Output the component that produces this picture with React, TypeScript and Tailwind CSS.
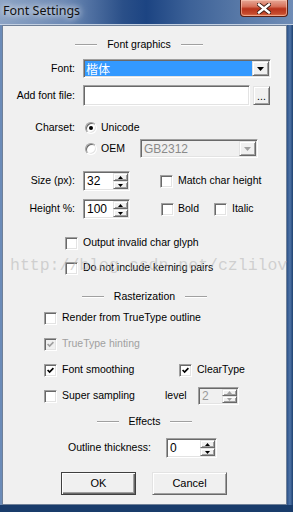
import React from 'react';

const sunken =
  'border border-t-[#a0a0a0] border-l-[#a0a0a0] border-r-white border-b-white shadow-[inset_1px_1px_0_#696969,inset_-1px_-1px_0_#e3e3e3]';
const raised =
  'border border-t-[#e3e3e3] border-l-[#e3e3e3] border-r-[#696969] border-b-[#696969] shadow-[inset_1px_1px_0_#ffffff,inset_-1px_-1px_0_#a0a0a0] bg-[#f0f0f0]';

const Etch = () => <div className="h-[2px] w-[22px] border-t border-t-[#a0a0a0] border-b border-b-white" />;

const Header = ({ label, className = '' }: { label: string; className?: string }) => (
  <div className={`flex h-[14px] items-center justify-center gap-[10px] ${className}`}>
    <Etch />
    <span>{label}</span>
    <Etch />
  </div>
);

const Check = ({ checked = false, disabled = false }: { checked?: boolean; disabled?: boolean }) => (
  <div
    className={`flex h-[13px] w-[13px] shrink-0 items-center justify-center ${sunken} ${
      disabled ? 'bg-[#f0f0f0]' : 'bg-white'
    }`}
  >
    {checked && (
      <svg width="7" height="7" viewBox="0 0 7 7">
        <polyline
          points="0.6,3 2.6,5 6.4,1.2"
          fill="none"
          stroke={disabled ? '#a0a0a0' : '#000'}
          strokeWidth="1.7"
        />
      </svg>
    )}
  </div>
);

const Radio = ({ checked = false }: { checked?: boolean }) => (
  <div className="relative h-[12px] w-[12px] shrink-0">
    <div className="absolute inset-0 rounded-full border border-t-[#a0a0a0] border-l-[#a0a0a0] border-r-white border-b-white bg-white shadow-[inset_1px_1px_0_#696969,inset_-1px_-1px_0_#e3e3e3]" />
    {checked && <div className="absolute left-[4px] top-[4px] h-[4px] w-[4px] rounded-full bg-black" />}
  </div>
);

const Arrow = ({ up, color = '#000' }: { up?: boolean; color?: string }) => (
  <svg width="5" height="3" viewBox="0 0 5 3">
    <path d={up ? 'M2.5 0 L5 3 L0 3 Z' : 'M0 0 L5 0 L2.5 3 Z'} fill={color} />
  </svg>
);

const Spinner = ({
  value,
  w,
  h,
  disabled = false,
}: {
  value: string;
  w: string;
  h: string;
  disabled?: boolean;
}) => (
  <div className={`flex ${w} ${h} shrink-0 p-[1px] ${sunken} ${disabled ? 'bg-[#f0f0f0]' : 'bg-white'}`}>
    <div className={`flex flex-1 items-center pl-[2px] text-[12px] ${disabled ? 'text-[#9a9a9a]' : 'text-black'}`}>
      {value}
    </div>
    <div className="flex w-[15px] flex-col">
      <div className={`flex flex-1 items-center justify-center ${raised}`}>
        <Arrow up color={disabled ? '#a0a0a0' : '#000'} />
      </div>
      <div className={`flex flex-1 items-center justify-center ${raised}`}>
        <Arrow color={disabled ? '#a0a0a0' : '#000'} />
      </div>
    </div>
  </div>
);

const DropButton = ({ disabled = false }: { disabled?: boolean }) => (
  <div className={`flex w-[17px] items-center justify-center ${raised}`}>
    <svg width="7" height="4" viewBox="0 0 7 4">
      <path d="M0 0 L7 0 L3.5 4 Z" fill={disabled ? '#a0a0a0' : '#000'} />
    </svg>
  </div>
);

const App = () => {
  return (
    <div className="flex h-[512px] w-[293px] flex-col overflow-hidden bg-[linear-gradient(180deg,#5c7eb0_0%,#2f5790_40%,#1b3d6c_100%)] font-['Liberation_Sans',Arial,sans-serif] text-[10.5px] text-black">
      {/* title bar */}
      <div className="relative flex h-[25px] shrink-0 items-start bg-[linear-gradient(90deg,#8ca3c4_0%,#6d8ab5_22%,#2a4f88_42%,#1c4482_50%,#3d6298_65%,#5d7daa_85%,#6f8cb6_100%)]">
        <div className="pl-[3px] pt-[3px] font-['Noto_Sans',sans-serif] text-[12.5px] leading-[16px] text-[#111] [text-shadow:0_0_6px_#ffffff,0_0_10px_rgba(255,255,255,0.8)]">
          Font Settings
        </div>
        <div className="ml-auto mr-[5px] flex h-[17px] w-[48px] items-center justify-center rounded-b-[4px] border border-t-0 border-[#5a1f14] bg-[linear-gradient(180deg,#e6a796_0%,#d7725b_40%,#b8321a_55%,#c54a2d_85%,#e07a55_100%)] shadow-[inset_0_0_0_1px_rgba(255,210,190,0.55)]">
          <svg width="14" height="11" viewBox="0 0 14 11">
            <path
              d="M2 1.5 L12 9.5 M12 1.5 L2 9.5"
              stroke="#3a1a12"
              strokeWidth="4.2"
              strokeLinecap="square"
            />
            <path d="M2 1.5 L12 9.5 M12 1.5 L2 9.5" stroke="#ffffff" strokeWidth="2.4" strokeLinecap="square" />
          </svg>
        </div>
        <div className="absolute bottom-0 left-0 right-0 h-[1px] bg-[#c3d0e2]" />
      </div>

      <div className="flex h-[480px] shrink-0">
        <div className="w-[2px] bg-[#6b8bb8]" />
        {/* client area */}
        <div className="relative flex h-[480px] w-[285px] flex-col border border-[#6f8098] bg-[#f0f0f0]">
          <Header label="Font graphics" className="mt-[12px] pr-[11px]" />

          <div className="mt-[7px] flex h-[19px] items-center">
            <div className="w-[72px] text-right">Font:</div>
            <div className={`ml-[8px] flex h-[19px] w-[188px] p-[1px] bg-white ${sunken}`}>
              <div className="flex flex-1 items-center bg-[#3399ff] pl-[1px] font-['Noto_Sans_CJK_SC',sans-serif] text-[12px] leading-none text-white">
                楷体
              </div>
              <DropButton />
            </div>
          </div>

          <div className="mt-[7px] flex h-[21px] items-center">
            <div className="w-[72px] text-right">Add font file:</div>
            <div className={`ml-[8px] h-[21px] w-[167px] bg-white ${sunken}`} />
            <div className={`ml-[3px] flex h-[19px] w-[17px] items-end justify-center pb-[3px] leading-none ${raised}`}>
              ...
            </div>
          </div>

          <div className="mt-[14px] flex h-[16px] items-center">
            <div className="w-[72px] text-right">Charset:</div>
            <div className="ml-[10px]">
              <Radio checked />
            </div>
            <span className="ml-[4px]">Unicode</span>
          </div>

          <div className="mt-[3px] flex h-[19px] items-center">
            <div className="ml-[82px]">
              <Radio />
            </div>
            <span className="ml-[4px] w-[39px]">OEM</span>
            <div className={`flex h-[19px] w-[118px] p-[1px] bg-[#f0f0f0] ${sunken}`}>
              <div className="flex flex-1 items-center pl-[2px] text-[12px] text-[#8a8a8a]">GB2312</div>
              <DropButton disabled />
            </div>
          </div>

          <div className="mt-[13px] flex h-[20px] items-center">
            <div className="w-[72px] text-right">Size (px):</div>
            <div className="ml-[8px]">
              <Spinner value="32" w="w-[47px]" h="h-[20px]" />
            </div>
            <div className="ml-[30px]">
              <Check />
            </div>
            <span className="ml-[5px]">Match char height</span>
          </div>

          <div className="mt-[8px] flex h-[20px] items-center">
            <div className="w-[72px] text-right">Height %:</div>
            <div className="ml-[8px]">
              <Spinner value="100" w="w-[47px]" h="h-[20px]" />
            </div>
            <div className="ml-[31px]">
              <Check />
            </div>
            <span className="ml-[4px] w-[36px]">Bold</span>
            <Check />
            <span className="ml-[5px]">Italic</span>
          </div>

          <div className="mt-[17px] flex h-[14px] items-center pl-[62px]">
            <Check />
            <span className="ml-[5px]">Output invalid char glyph</span>
          </div>

          <div className="mt-[11px] flex h-[14px] items-center pl-[62px]">
            <Check />
            <span className="ml-[5px]">Do not include kerning pairs</span>
          </div>

          <Header label="Rasterization" className="mt-[15px]" />

          <div className="mt-[7px] flex h-[14px] items-center pl-[41px]">
            <Check />
            <span className="ml-[5px]">Render from TrueType outline</span>
          </div>

          <div className="mt-[12px] flex h-[14px] items-center pl-[41px]">
            <Check checked disabled />
            <span className="ml-[5px] text-[#a0a0a0]">TrueType hinting</span>
          </div>

          <div className="mt-[12px] flex h-[14px] items-center pl-[41px]">
            <div className="flex w-[135px] items-center">
              <Check checked />
              <span className="ml-[5px]">Font smoothing</span>
            </div>
            <Check checked />
            <span className="ml-[5px]">ClearType</span>
          </div>

          <div className="mt-[10px] flex h-[18px] items-center pl-[41px]">
            <div className="flex w-[121px] items-center">
              <Check />
              <span className="ml-[5px]">Super sampling</span>
            </div>
            <span className="w-[33px]">level</span>
            <Spinner value="2" w="w-[41px]" h="h-[18px]" disabled />
          </div>

          <Header label="Effects" className="mt-[10px]" />

          <div className="mt-[9px] flex h-[20px] items-center pl-[65px]">
            <span>Outline thickness:</span>
            <div className="ml-[15px]">
              <Spinner value="0" w="w-[51px]" h="h-[20px]" />
            </div>
          </div>

          <div className="mt-[14px] flex h-[23px] items-center gap-[16px] pl-[58px]">
            <div className="flex h-[23px] w-[75px] items-center justify-center border border-[#404040] bg-[#f0f0f0] shadow-[inset_1px_1px_0_#ffffff,inset_-1px_-1px_0_#696969,inset_-2px_-2px_0_#a0a0a0] text-[11px]">
              OK
            </div>
            <div className={`flex h-[23px] w-[75px] items-center justify-center text-[11px] ${raised}`}>Cancel</div>
          </div>

          {/* watermark */}
          <div className="pointer-events-none absolute left-[7px] top-[230px] whitespace-nowrap font-['Liberation_Mono',monospace] text-[16.5px] leading-[20px] text-[rgba(185,185,185,0.6)]">
            http://blog.csdn.net/czlilov
          </div>
        </div>
        <div className="flex-1 bg-[linear-gradient(90deg,#2d5288_0%,#4f74a8_50%,#1e416f_100%)]" />
      </div>
      <div className="flex-1 bg-[#193c6b]" />
    </div>
  );
};

export default App;
